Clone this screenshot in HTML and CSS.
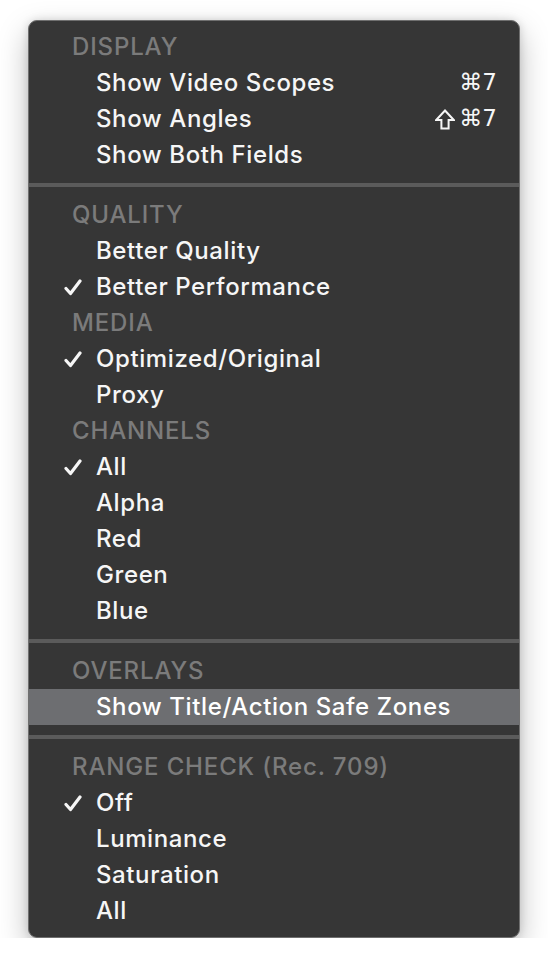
FILE: index.html
```html
<!DOCTYPE html>
<html>
<head>
<meta charset="utf-8">
<link rel="stylesheet" href="styles.css">
</head>
<body>
<div class="menu">
  <div class="hdr">DISPLAY</div>
  <div class="item"><span class="chk"></span><span class="lbl">Show Video Scopes</span><span class="key">⌘7</span></div>
  <div class="item"><span class="chk"></span><span class="lbl">Show Angles</span><span class="key"><svg class="shift" viewBox="0 0 20 21" width="20" height="21"><path d="M10 1.5 L18.8 11 L13.6 11 L13.6 19.5 L6.4 19.5 L6.4 11 L1.2 11 Z" /></svg>⌘7</span></div>
  <div class="item"><span class="chk"></span><span class="lbl">Show Both Fields</span></div>
  <div class="sep"></div>
  <div class="hdr">QUALITY</div>
  <div class="item"><span class="chk"></span><span class="lbl">Better Quality</span></div>
  <div class="item"><span class="chk"><svg viewBox="0 0 18 17" width="18" height="17"><path d="M2 9.5 L6.5 14.5 L16 2" /></svg></span><span class="lbl">Better Performance</span></div>
  <div class="hdr">MEDIA</div>
  <div class="item"><span class="chk"><svg viewBox="0 0 18 17" width="18" height="17"><path d="M2 9.5 L6.5 14.5 L16 2" /></svg></span><span class="lbl">Optimized/Original</span></div>
  <div class="item"><span class="chk"></span><span class="lbl">Proxy</span></div>
  <div class="hdr">CHANNELS</div>
  <div class="item"><span class="chk"><svg viewBox="0 0 18 17" width="18" height="17"><path d="M2 9.5 L6.5 14.5 L16 2" /></svg></span><span class="lbl">All</span></div>
  <div class="item"><span class="chk"></span><span class="lbl">Alpha</span></div>
  <div class="item"><span class="chk"></span><span class="lbl">Red</span></div>
  <div class="item"><span class="chk"></span><span class="lbl">Green</span></div>
  <div class="item"><span class="chk"></span><span class="lbl">Blue</span></div>
  <div class="sep"></div>
  <div class="hdr">OVERLAYS</div>
  <div class="item active"><span class="chk"></span><span class="lbl">Show Title/Action Safe Zones</span></div>
  <div class="sep"></div>
  <div class="hdr">RANGE CHECK (Rec. 709)</div>
  <div class="item"><span class="chk"><svg viewBox="0 0 18 17" width="18" height="17"><path d="M2 9.5 L6.5 14.5 L16 2" /></svg></span><span class="lbl">Off</span></div>
  <div class="item"><span class="chk"></span><span class="lbl">Luminance</span></div>
  <div class="item"><span class="chk"></span><span class="lbl">Saturation</span></div>
  <div class="item"><span class="chk"></span><span class="lbl">All</span></div>
</div>
</body>
</html>
```
FILE: styles.css
```css
html, body {
  margin: 0;
  padding: 0;
  background: #ffffff;
}
body {
  padding: 20px 0 0 28px;
  font-family: Inter, "Noto Sans", "DejaVu Sans", sans-serif;
}
.menu {
  box-sizing: border-box;
  width: 492px;
  background: #363636;
  border: 1px solid #6f6f6f;
  border-radius: 9px;
  padding: 8px 0;
  box-shadow: 0 12px 30px rgba(0, 0, 0, 0.26), 0 0 8px rgba(0, 0, 0, 0.14);
}
.hdr, .item {
  height: 36px;
  display: flex;
  align-items: center;
  font-size: 24px;
  font-weight: 500;
  letter-spacing: 0.6px;
  padding-bottom: 2px;
  box-sizing: border-box;
}
.hdr {
  padding-left: 43px;
  color: #7b7b7b;
  letter-spacing: 0.85px;
}
.item {
  color: #f6f6f6;
  padding-left: 35px;
  padding-right: 22px;
}
.item.active {
  background: #6d6e71;
  color: #ffffff;
}
.chk {
  width: 32px;
  height: 17px;
  flex: none;
  display: flex;
  align-items: center;
  margin-top: 2px;
}
.chk svg path {
  fill: none;
  stroke: #f6f6f6;
  stroke-width: 3.2;
  stroke-linecap: round;
  stroke-linejoin: round;
}
.lbl {
  flex: 1;
}
.key {
  display: flex;
  align-items: center;
  font-family: "DejaVu Sans", Inter, sans-serif;
  font-size: 23px;
  font-weight: 400;
  letter-spacing: 0;
}
.shift {
  margin-right: 4px;
  margin-top: 2px;
}
.shift path {
  fill: none;
  stroke: #f6f6f6;
  stroke-width: 2;
  stroke-linejoin: miter;
}
.sep {
  height: 4px;
  margin: 10px 0;
  background: #5b5b5b;
}
```
